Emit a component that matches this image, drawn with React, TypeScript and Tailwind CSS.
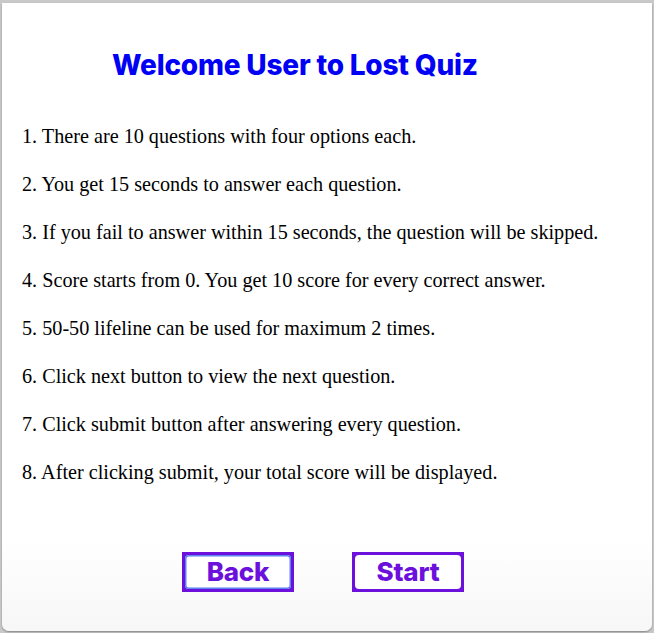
const rules = [
  "There are 10 questions with four options each.",
  "You get 15 seconds to answer each question.",
  "If you fail to answer within 15 seconds, the question will be skipped.",
  "Score starts from 0. You get 10 score for every correct answer.",
  "50-50 lifeline can be used for maximum 2 times.",
  "Click next button to view the next question.",
  "Click submit button after answering every question.",
  "After clicking submit, your total score will be displayed.",
];

const heading = "font-['Inter',sans-serif] font-extrabold tracking-[-0.2px]";

function QuizButton({ label, focused }: { label: string; focused?: boolean }) {
  return (
    <button className="block bg-[#6c10dc] p-[3px] w-[112px] h-[40px]">
      <span
        className={`flex h-full items-center justify-center rounded-[4px] bg-white ${
          focused ? "shadow-[inset_0_0_0_1.5px_#5a80f4]" : ""
        }`}
      >
        <span className={`${heading} text-[26px] leading-none text-[#6c10dc]`}>{label}</span>
      </span>
    </button>
  );
}

export default function App() {
  return (
    <div className="w-[654px] h-[633px] bg-[#c9c9c9] pt-[3px] px-[2px] pb-[2px]">
      <div className="h-[628px] rounded-b-[7px] bg-gradient-to-b from-white from-85% to-[#f7f7f7] shadow-[0_1px_2px_rgba(0,0,0,0.35)] flex flex-col">
        <h1 className={`${heading} text-[28px] leading-none text-[#0000f5] pt-[48px] pl-[110px]`}>
          Welcome User to Lost Quiz
        </h1>
        <ol className="mt-[46px] pl-[20px] flex flex-col gap-[25px] font-['Liberation_Serif',serif] text-[20.2px] leading-[23px] text-black">
          {rules.map((r, i) => (
            <li key={i}>
              {i + 1}. {r}
            </li>
          ))}
        </ol>
        <div className="mt-auto mb-[39px] flex gap-[58px] pl-[180px]">
          <QuizButton label="Back" focused />
          <QuizButton label="Start" />
        </div>
      </div>
    </div>
  );
}
